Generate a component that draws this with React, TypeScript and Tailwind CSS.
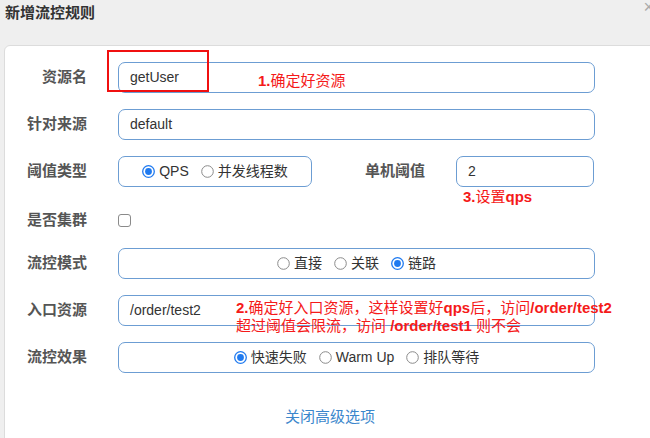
import React from "react";

const font = 'font-["Liberation_Sans","Noto_Sans_CJK_SC",sans-serif]';

const Radio = ({ checked, label }: { checked?: boolean; label: string }) => (
  <span className="flex items-center gap-[4px]">
    <svg width="13" height="13" viewBox="0 0 13 13">
      {checked ? (
        <>
          <circle cx="6.5" cy="6.5" r="5.8" fill="#fff" stroke="#1f7af0" strokeWidth="1.3" />
          <circle cx="6.5" cy="6.5" r="3.4" fill="#1f7af0" />
        </>
      ) : (
        <circle cx="6.5" cy="6.5" r="5.8" fill="#fff" stroke="#8a8a8a" strokeWidth="1" />
      )}
    </svg>
    <span>{label}</span>
  </span>
);

const Row = ({ label, children, h = "h-[31px]" }: { label: string; children: React.ReactNode; h?: string }) => (
  <div className={`flex items-center gap-[31px] ${h}`}>
    <div className="w-[82px] text-right text-[15px] font-bold text-[#555]">{label}</div>
    {children}
  </div>
);

const box = "h-[31px] border border-[#6c9dd3] rounded-[7px] bg-white text-[14px] text-[#333]";

export default function App() {
  return (
    <div className={`relative w-[650px] h-[438px] overflow-hidden bg-[#efefef] ${font}`}>
      <div className="h-[45px] px-[5px] pt-[4px]">
        <h1 className="text-[15px] leading-[18px] font-bold text-[#333]">新增流控规则</h1>
      </div>
      <span className="absolute right-[-4px] top-[-6px] text-[18px] text-[#aaa]">×</span>

      <div className="ml-[4px] w-[660px] h-[400px] bg-white border border-[#dcdcdc] rounded-[6px] pt-[16px] flex flex-col gap-[16px]">
        <Row label="资源名">
          <div className={`${box} w-[477px] flex items-center px-[11px]`}>getUser</div>
        </Row>
        <Row label="针对来源">
          <div className={`${box} w-[477px] flex items-center px-[11px]`}>default</div>
        </Row>
        <Row label="阈值类型">
          <div className={`${box} w-[194px] flex items-center justify-center gap-[12px]`}>
            <Radio checked label="QPS" />
            <Radio label="并发线程数" />
          </div>
          <div className="w-[113px] -ml-[31px] text-right text-[15px] font-bold text-[#555]">单机阈值</div>
          <div className={`${box} w-[138px] flex items-center px-[11px]`}>2</div>
        </Row>
        <Row label="是否集群" h="h-[29px] pt-[6px]">
          <span className="w-[13px] h-[13px] border border-[#8a8a8a] rounded-[3px] bg-white" />
        </Row>
        <Row label="流控模式">
          <div className={`${box} w-[477px] flex items-center justify-center gap-[12px]`}>
            <Radio label="直接" />
            <Radio label="关联" />
            <Radio checked label="链路" />
          </div>
        </Row>
        <Row label="入口资源">
          <div className={`${box} w-[477px] flex items-center px-[11px]`}>/order/test2</div>
        </Row>
        <Row label="流控效果">
          <div className={`${box} w-[477px] flex items-center justify-center gap-[12px]`}>
            <Radio checked label="快速失败" />
            <Radio label="Warm Up" />
            <Radio label="排队等待" />
          </div>
        </Row>
        <div className="w-[650px] text-center pt-[17px] text-[15px] text-[#3b87cc]">关闭高级选项</div>
      </div>

      {/* annotations */}
      <div className="absolute left-[107px] top-[50px] w-[102px] h-[42px] border-2 border-[#f01010]" />
      <div className="absolute left-[258px] top-[72px] text-[15px] leading-[18px] text-[#f51a1a]">
        <b>1.</b>确定好资源
      </div>
      <div className="absolute left-[463px] top-[188px] text-[15px] leading-[18px] text-[#f51a1a]">
        <b>3.</b>设置<b>qps</b>
      </div>
      <div className="absolute left-[236px] top-[299px] text-[15px] leading-[18px] text-[#f51a1a]">
        <div>
          <b>2.</b>确定好入口资源，这样设置好<b>qps</b>后，访问<b>/order/test2</b>
        </div>
        <div>
          超过阈值会限流，访问 <b>/order/test1</b> 则不会
        </div>
      </div>
    </div>
  );
}
